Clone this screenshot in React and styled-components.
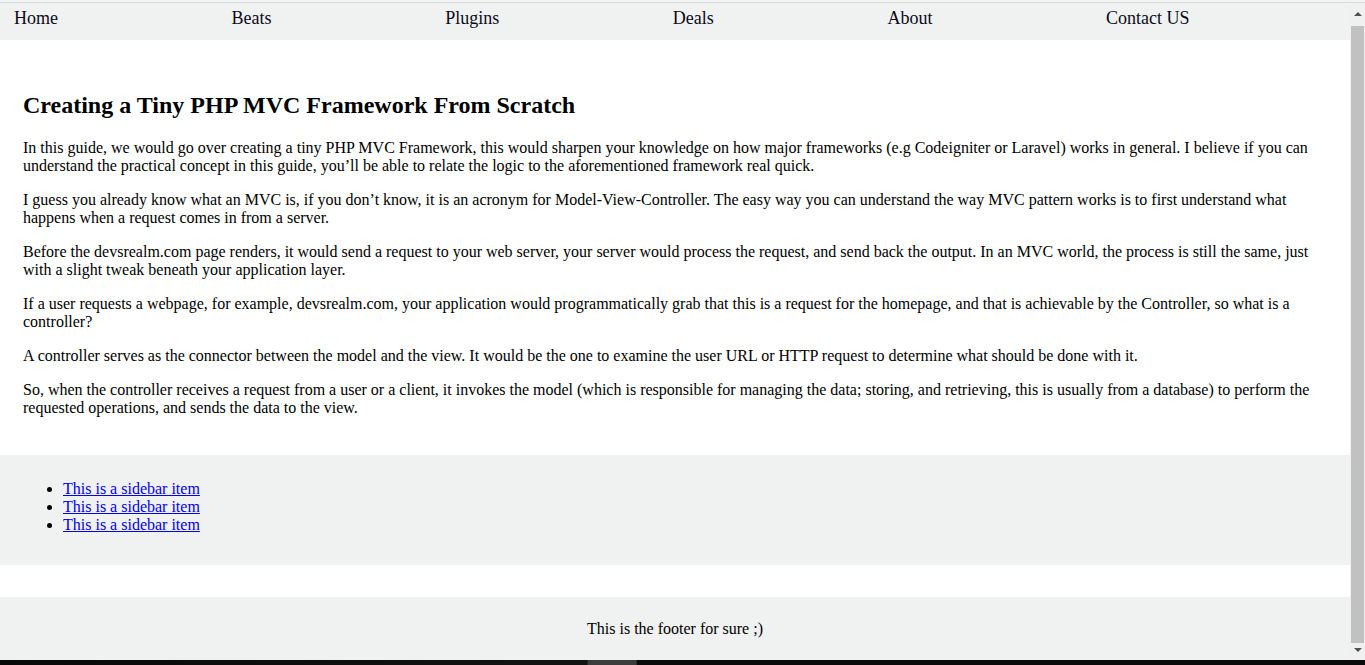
import styled, { createGlobalStyle } from 'styled-components';

const GlobalStyle = createGlobalStyle`
  html, body {
    margin: 0;
    padding: 0;
    background: #ffffff;
    font-family: "Liberation Serif", "Times New Roman", serif;
    color: #000;
  }
`;

const navItems = ['Home', 'Beats', 'Plugins', 'Deals', 'About', 'Contact US'];

const paragraphs = [
  'In this guide, we would go over creating a tiny PHP MVC Framework, this would sharpen your knowledge on how major frameworks (e.g Codeigniter or Laravel) works in general. I believe if you can understand the practical concept in this guide, you\u2019ll be able to relate the logic to the aforementioned framework real quick.',
  'I guess you already know what an MVC is, if you don\u2019t know, it is an acronym for Model-View-Controller. The easy way you can understand the way MVC pattern works is to first understand what happens when a request comes in from a server.',
  'Before the devsrealm.com page renders, it would send a request to your web server, your server would process the request, and send back the output. In an MVC world, the process is still the same, just with a slight tweak beneath your application layer.',
  'If a user requests a webpage, for example, devsrealm.com, your application would programmatically grab that this is a request for the homepage, and that is achievable by the Controller, so what is a controller?',
  'A controller serves as the connector between the model and the view. It would be the one to examine the user URL or HTTP request to determine what should be done with it.',
  'So, when the controller receives a request from a user or a client, it invokes the model (which is responsible for managing the data; storing, and retrieving, this is usually from a database) to perform the requested operations, and sends the data to the view.',
];

export default function App() {
  return (
    <>
      <GlobalStyle />
      <TopEdge />
      <Viewport>
        <Page>
          <Nav>
            {navItems.map((item) => (
              <NavItem key={item}>{item}</NavItem>
            ))}
          </Nav>
          <Main>
            <Title>Creating a Tiny PHP MVC Framework From Scratch</Title>
            {paragraphs.map((text, i) => (
              <Para key={i}>{text}</Para>
            ))}
          </Main>
          <Sidebar>
            <SideList>
              {[1, 2, 3].map((n) => (
                <li key={n}>
                  <a href="#">This is a sidebar item</a>
                </li>
              ))}
            </SideList>
          </Sidebar>
          <Footer>This is the footer for sure ;)</Footer>
        </Page>
        <ScrollTrack>
          <ScrollButton $height={23} $pad={9}>
            <Arrow $dir="up" />
          </ScrollButton>
          <Thumb />
          <ScrollButton $height={17} $pad={5}>
            <Arrow $dir="down" />
          </ScrollButton>
        </ScrollTrack>
      </Viewport>
      <Taskbar />
    </>
  );
}

const TopEdge = styled.div`
  height: 2px;
  background: #f3f3f3;
  border-bottom: 1px solid #d9dadb;
`;

const Viewport = styled.div`
  display: flex;
  align-items: stretch;
`;

const Page = styled.div`
  flex: 1;
  min-width: 0;
`;

const Nav = styled.nav`
  display: flex;
  align-items: flex-start;
  gap: 173.6px;
  height: 37px;
  box-sizing: border-box;
  padding: 5px 0 0 14px;
  background: #f0f1f1;
`;

const NavItem = styled.span`
  font-size: 18px;
  color: #0b0b1a;
`;

const Main = styled.main`
  padding: 32px 23px 22px;
`;

const Title = styled.h2`
  font-size: 24px;
  font-weight: bold;
  margin: 20px 0;
`;

const Para = styled.p`
  font-size: 16px;
  margin: 16px 0;
`;

const Sidebar = styled.aside`
  background: #f0f1f1;
  padding: 9px 23px 15px;
`;

const SideList = styled.ul`
  margin: 16px 0;
  padding-left: 40px;
  font-size: 16px;

  a {
    color: #0000ee;
    text-decoration: underline;
  }
`;

const Footer = styled.footer`
  margin-top: 32px;
  background: #f0f1f1;
  text-align: center;
  font-size: 16px;
  padding: 23px 0 22px;
`;

const ScrollTrack = styled.div`
  width: 15px;
  flex-shrink: 0;
  display: flex;
  flex-direction: column;
  background: #f0f0f0;
`;

const ScrollButton = styled.div`
  height: ${(p) => p.$height}px;
  box-sizing: border-box;
  padding-top: ${(p) => p.$pad}px;
  display: flex;
  justify-content: center;
  align-items: flex-start;
`;

const Arrow = styled.div`
  width: 0;
  height: 0;
  border-left: 4px solid transparent;
  border-right: 4px solid transparent;
  ${(p) =>
    p.$dir === 'up'
      ? 'border-bottom: 4px solid #505050;'
      : 'border-top: 4px solid #505050;'}
`;

const Thumb = styled.div`
  flex: 1;
  margin: 0 1px 0 1px;
  background: #c1c1c1;
`;

const Taskbar = styled.div`
  height: 5px;
  background: linear-gradient(
    to right,
    #080808 0,
    #121212 40%,
    #121212 43%,
    #3c3c3c 43.1%,
    #3c3c3c 46.6%,
    #0a0a0a 46.7%,
    #0a0a0a 100%
  );
`;
